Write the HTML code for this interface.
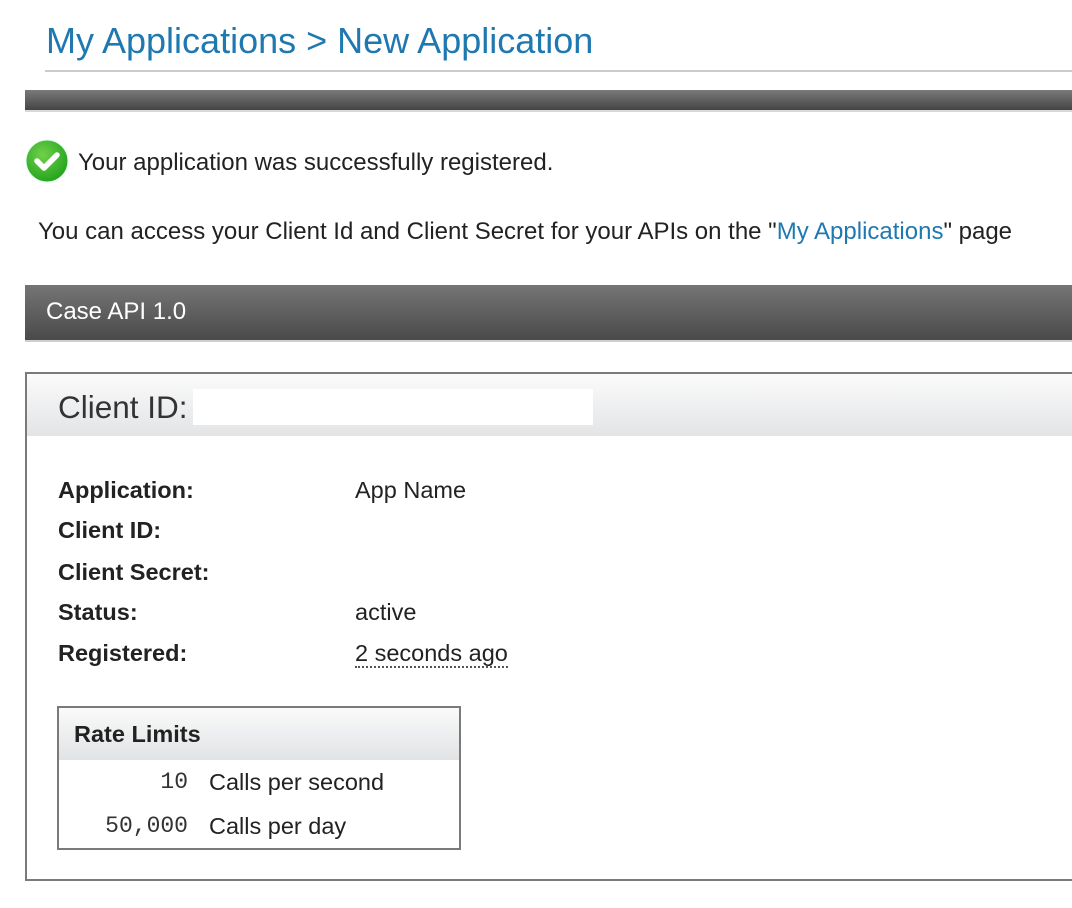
<!DOCTYPE html>
<html><head><meta charset="utf-8"><style>
body{margin:0;width:1072px;height:908px;background:#fff;font-family:"Liberation Sans",Arial,sans-serif;color:#222;position:relative;overflow:hidden}
.a{position:absolute;white-space:nowrap}
.lbl{position:absolute;left:58px;font-weight:bold;font-size:23.5px;line-height:26px}
.val{position:absolute;left:355px;font-size:23.5px;line-height:26px}
</style></head><body>
<div class="a" style="left:46px;top:19px;font-size:36px;color:#1f78b0;line-height:44px">My Applications &gt; New Application</div>
<div class="a" style="left:45px;top:70px;width:1027px;height:2px;background:#ccc"></div>
<div class="a" style="left:25px;top:90px;width:1047px;height:20px;background:linear-gradient(#7a7a7a,#444)"></div>
<div class="a" style="left:25px;top:110px;width:1047px;height:2px;background:#d8d8d8"></div>
<svg class="a" style="left:24px;top:138px" width="46" height="46" viewBox="0 0 46 46"><defs><radialGradient id="g" cx="0.4" cy="0.35" r="0.7"><stop offset="0" stop-color="#6fd14a"/><stop offset="1" stop-color="#22a01c"/></radialGradient></defs><circle cx="23" cy="23" r="21" fill="url(#g)" stroke="#dfe" stroke-width="1"/><path d="M13 23l7 7 13-13" fill="none" stroke="#fff" stroke-width="5.5" stroke-linecap="round" stroke-linejoin="round"/></svg>
<div class="a" style="left:78px;top:149px;font-size:24px;line-height:28px">Your application was successfully registered.</div>
<div class="a" style="left:38px;top:218px;font-size:24px;line-height:28px">You can access your Client Id and Client Secret for your APIs on the "<span style="color:#1f78b0">My Applications</span>" page</div>
<div class="a" style="left:25px;top:285px;width:1047px;height:55px;background:linear-gradient(#757575,#4a4a4a)"></div>
<div class="a" style="left:25px;top:340px;width:1047px;height:2px;background:#cfcfcf"></div>
<div class="a" style="left:46px;top:298px;font-size:24px;color:#fff;line-height:28px">Case API 1.0</div>
<div class="a" style="left:25px;top:372px;width:1060px;height:509px;border:2px solid #7a7a7a;box-sizing:border-box"></div>
<div class="a" style="left:27px;top:374px;width:1045px;height:62px;background:linear-gradient(#fbfbfb,#e2e4e6)"></div>
<div class="a" style="left:58px;top:388px;font-size:31.5px;line-height:38px;color:#333">Client ID:</div>
<div class="a" style="left:193px;top:389px;width:400px;height:36px;background:#fff"></div>
<div class="lbl" style="top:477px">Application:</div><div class="val" style="top:477px">App Name</div>
<div class="lbl" style="top:517px">Client ID:</div>
<div class="lbl" style="top:559px">Client Secret:</div>
<div class="lbl" style="top:599px">Status:</div><div class="val" style="top:599px">active</div>
<div class="lbl" style="top:640px">Registered:</div><div class="val" style="top:640px;border-bottom:2px dotted #555">2 seconds ago</div>
<div class="a" style="left:57px;top:706px;width:404px;height:144px;border:2px solid #7a7a7a;box-sizing:border-box"></div>
<div class="a" style="left:59px;top:708px;width:400px;height:52px;background:linear-gradient(#fafafa,#e1e3e5)"></div>
<div class="a" style="left:74px;top:721px;font-size:23.5px;font-weight:bold;line-height:26px">Rate Limits</div>
<div class="a" style="left:60px;width:128px;text-align:right;top:769px;font-family:'Liberation Mono',monospace;font-size:23px;color:#333;line-height:26px">10</div>
<div class="a" style="left:209px;top:769px;font-size:23.5px;line-height:26px">Calls per second</div>
<div class="a" style="left:60px;width:128px;text-align:right;top:813px;font-family:'Liberation Mono',monospace;font-size:23px;color:#333;line-height:26px">50,000</div>
<div class="a" style="left:209px;top:813px;font-size:23.5px;line-height:26px">Calls per day</div>
</body></html>
